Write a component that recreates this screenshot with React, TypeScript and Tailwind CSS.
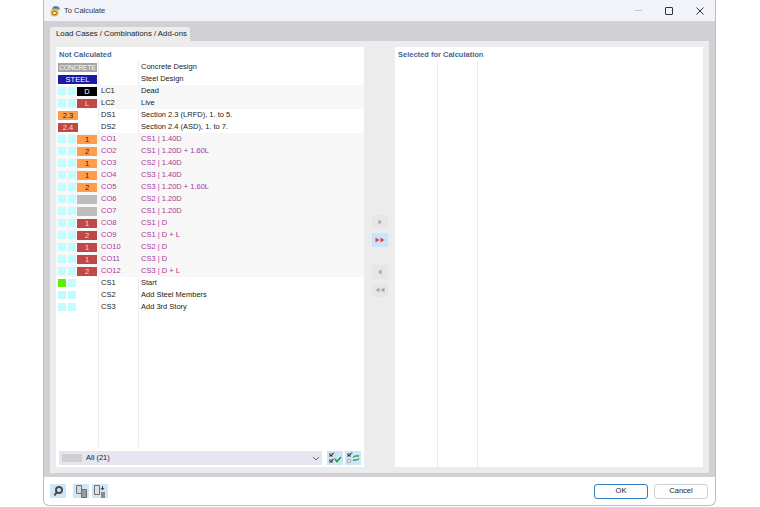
type Row = {
  mark?: "concrete" | "steel";
  squares?: boolean;
  green?: boolean;
  badge?: string;
  badgeColor?: string;
  badgeText?: string;
  wide?: boolean;
  code?: string;
  label: string;
  pink?: boolean;
  shaded?: boolean;
};

const ORANGE = "bg-[#ff9c4a]";
const RED = "bg-[#c04848]";
const GREY = "bg-[#bdbdbd]";

const co = (code: string, n: string, color: string, label: string): Row => ({
  squares: true,
  badge: n,
  badgeColor: color,
  badgeText: color === RED ? "text-[#f6dcdc]" : "text-[#222]",
  code,
  label,
  pink: true,
  shaded: true,
});

const ROWS: Row[] = [
  { mark: "concrete", label: "Concrete Design" },
  { mark: "steel", label: "Steel Design" },
  { squares: true, badge: "D", badgeColor: "bg-black", badgeText: "text-white", code: "LC1", label: "Dead", shaded: true },
  { squares: true, badge: "L", badgeColor: RED, badgeText: "text-[#f6dcdc]", code: "LC2", label: "Live", shaded: true },
  { wide: true, badge: "2.3", badgeColor: ORANGE, badgeText: "text-[#222]", code: "DS1", label: "Section 2.3 (LRFD), 1. to 5." },
  { wide: true, badge: "2.4", badgeColor: RED, badgeText: "text-[#f6dcdc]", code: "DS2", label: "Section 2.4 (ASD), 1. to 7." },
  co("CO1", "1", ORANGE, "CS1 | 1.40D"),
  co("CO2", "2", ORANGE, "CS1 | 1.20D + 1.60L"),
  co("CO3", "1", ORANGE, "CS2 | 1.40D"),
  co("CO4", "1", ORANGE, "CS3 | 1.40D"),
  co("CO5", "2", ORANGE, "CS3 | 1.20D + 1.60L"),
  co("CO6", "", GREY, "CS2 | 1.20D"),
  co("CO7", "", GREY, "CS1 | 1.20D"),
  co("CO8", "1", RED, "CS1 | D"),
  co("CO9", "2", RED, "CS1 | D + L"),
  co("CO10", "1", RED, "CS2 | D"),
  co("CO11", "1", RED, "CS3 | D"),
  co("CO12", "2", RED, "CS3 | D + L"),
  { squares: true, green: true, code: "CS1", label: "Start" },
  { squares: true, code: "CS2", label: "Add Steel Members" },
  { squares: true, code: "CS3", label: "Add 3rd Story" },
];

function ListRow({ row }: { row: Row }) {
  return (
    <div className={`flex h-3 items-center pl-0.5 ${row.shaded ? "bg-[#f7f7f7]" : ""}`}>
      <div className="flex w-10 shrink-0 items-center justify-between pr-px">
        {row.mark === "concrete" && (
          <div className="h-[9px] w-[39px] bg-[#a6a6a6] text-center text-[6.5px] leading-[9px] text-white">CONCRETE</div>
        )}
        {row.mark === "steel" && (
          <div className="h-[9px] w-[39px] bg-[#1a1aa6] text-center leading-[9px] text-white">STEEL</div>
        )}
        {row.wide && (
          <div className={`h-[9px] w-5 text-center leading-[9px] ${row.badgeColor} ${row.badgeText}`}>{row.badge}</div>
        )}
        {row.squares && (
          <>
            <div className={`size-2 ${row.green ? "bg-[#5cf000]" : "bg-[#c4fbfd]"}`} />
            <div className="size-2 bg-[#c4fbfd]" />
            {row.badge !== undefined ? (
              <div className={`h-[9px] w-5 text-center leading-[9px] ${row.badgeColor} ${row.badgeText}`}>{row.badge}</div>
            ) : (
              <div className="w-5" />
            )}
          </>
        )}
      </div>
      <div className={`w-10 shrink-0 pl-[3px] ${row.pink ? "text-[#a8389c]" : "text-[#222]"}`}>{row.code}</div>
      <div className={`pl-[3px] whitespace-nowrap ${row.pink ? "text-[#a8389c]" : "text-[#222]"}`}>{row.label}</div>
    </div>
  );
}

function ColumnLine({ className }: { className: string }) {
  return <div className={`absolute top-0 bottom-0 w-px bg-[#ececec] ${className}`} />;
}

function ArrowButton({ active, double, left }: { active?: boolean; double?: boolean; left?: boolean }) {
  const fill = active ? "#e8404c" : "#a8a8a8";
  return (
    <div className={`flex h-3.5 w-4 items-center justify-center ${active ? "bg-[#cce4f7]" : "bg-[#e6e6e6]"}`}>
      <svg width="10" height="6" viewBox="0 0 10 6" className={left ? "rotate-180" : ""}>
        {double ? (
          <path d="M.5 .5L4.500 3 .5 5.500zM5.500 .5L9.500 3l-4 2.500z" fill={fill} />
        ) : (
          <path d="M3.500 .5L7 3 3.500 5.500z" fill={fill} />
        )}
      </svg>
    </div>
  );
}

function FooterIcon({ children }: { children: React.ReactNode }) {
  return <div className="flex h-3.5 w-4 items-center justify-center bg-[#cfe6f8]">{children}</div>;
}

export default function App() {
  return (
    <div className="h-[507px] w-[760px] bg-white font-['Liberation_Sans',sans-serif] text-[7.5px] text-[#222]">
      <div className="ml-[43px] flex h-[506px] w-[673px] flex-col overflow-hidden rounded-b-md border border-t-0 border-[#bdbdbd] bg-white">
        {/* title bar */}
        <div className="flex h-[21px] shrink-0 items-center bg-[#f2f3f9]">
          <svg width="12" height="12" viewBox="0 0 12 12" className="ml-[5px]">
            <path d="M3 5a4 4 0 0 1 4-4l3 1 1 3-3-1H5z" fill="#4a7fa8" />
            <circle cx="5.500" cy="7.500" r="4" fill="#eab52e" />
            <circle cx="5.500" cy="8" r="1.800" fill="#fff" stroke="#6b5210" strokeWidth=".8" />
          </svg>
          <span className="ml-[3px] text-[#333]">To Calculate</span>
          <div className="ml-auto flex items-center">
            <div className="h-px w-[7px] bg-[#c4c4c4]" />
            <div className="ml-[23px] size-2 rounded-[1px] border border-[#333]" />
            <svg width="8" height="8" viewBox="0 0 8 8" className="mr-[11px] ml-[23px]">
              <path d="M.5 .5l7 7M7.500 .5l-7 7" stroke="#333" strokeWidth="1" />
            </svg>
          </div>
        </div>

        {/* tab area */}
        <div className="flex h-[456px] shrink-0 flex-col bg-[#d1d1d5] px-[6px] pt-[6px]">
          <div className="flex h-3.5 w-[140px] shrink-0 items-center rounded-t-[2px] bg-[#ececec] pl-[6px] text-[7.8px] whitespace-nowrap">
            Load Cases / Combinations / Add-ons
          </div>
          <div className="flex h-[432px] bg-[#ececec] p-[6px]">
            {/* left list */}
            <div className="flex h-[420px] w-[308px] shrink-0 flex-col bg-white">
              <div className="h-3.5 pt-0.5 pl-[3px] font-bold text-[#4a6590]">Not Calculated</div>
              <div className="relative min-h-0 flex-1">
                <ColumnLine className="left-[42px]" />
                <ColumnLine className="left-[82px]" />
                <div className="relative">
                  {ROWS.map((row) => (
                    <ListRow key={row.label + row.code} row={row} />
                  ))}
                </div>
              </div>
              <div className="flex h-5 items-start px-[3px] pt-1">
                <div className="flex h-3.5 w-[263px] shrink-0 items-center bg-[#e6e6f2] pl-[3px]">
                  <div className="h-2 w-5 bg-[#cfcfcf]" />
                  <span className="ml-1">All (21)</span>
                  <svg width="8" height="5" viewBox="0 0 8 5" className="mr-0.5 ml-auto">
                    <path d="M1 1l3 3 3-3" stroke="#666" fill="none" />
                  </svg>
                </div>
                <div className="ml-[5px] flex h-3.5 w-4 shrink-0 items-center justify-center bg-[#cfe6f8]">
                  <svg width="14" height="12" viewBox="0 0 14 12">
                    <rect x="1" y="1" width="4" height="4" fill="#9a9a9a" />
                    <rect x="1" y="7" width="4" height="4" fill="#9a9a9a" />
                    <path d="M1.500 2.500L3 4l3-3.500M1.500 8.500L3 10l3-3.500" stroke="#333" fill="none" />
                    <path d="M7 7l2 2.500L13 5" stroke="#1a9a3a" fill="none" strokeWidth="1.500" />
                  </svg>
                </div>
                <div className="ml-0.5 flex h-3.5 w-4 shrink-0 items-center justify-center bg-[#cfe6f8]">
                  <svg width="14" height="12" viewBox="0 0 14 12">
                    <rect x="1" y="1" width="4" height="4" fill="#9a9a9a" />
                    <rect x="1.500" y="7.500" width="3" height="3" fill="none" stroke="#b4b4b4" />
                    <path d="M1.500 2.500L3 4l3-3.500" stroke="#333" fill="none" />
                    <path d="M7 5.500C8 4 10 3.500 13 4M13 6.500C12 8 10 8.500 7 8" stroke="#1a9a3a" fill="none" strokeWidth="1.300" />
                  </svg>
                </div>
              </div>
            </div>

            {/* transfer buttons */}
            <div className="flex w-[31px] shrink-0 flex-col items-center pt-[168px]">
              <ArrowButton />
              <div className="mt-1">
                <ArrowButton active double />
              </div>
              <div className="mt-[18px]">
                <ArrowButton left />
              </div>
              <div className="mt-1">
                <ArrowButton left double />
              </div>
            </div>

            {/* right list */}
            <div className="flex h-[420px] w-[308px] shrink-0 flex-col bg-white">
              <div className="h-3.5 pt-0.5 pl-[3px] font-bold text-[#4a6590]">Selected for Calculation</div>
              <div className="relative flex-1">
                <ColumnLine className="left-[42px]" />
                <ColumnLine className="left-[82px]" />
              </div>
            </div>
          </div>
        </div>

        {/* footer */}
        <div className="flex min-h-0 flex-1 items-center pr-[7px] pl-[6px]">
          <FooterIcon>
            <svg width="12" height="12" viewBox="0 0 12 12">
              <circle cx="7" cy="5" r="3" fill="#dce9f3" stroke="#4a4a4a" strokeWidth="2" />
              <path d="M4.500 7.500L2.500 10.500" stroke="#4a4a4a" strokeWidth="2" />
            </svg>
          </FooterIcon>
          <div className="ml-[7px]">
            <FooterIcon>
              <svg width="14" height="13" viewBox="0 0 14 13">
                <path d="M2.500 .5h5v8h-5z" fill="#d8d8d8" stroke="#707070" />
                <path d="M7.500 4.500h5v8h-5z" fill="#9a9a9a" stroke="#707070" />
              </svg>
            </FooterIcon>
          </div>
          <div className="ml-[3px]">
            <FooterIcon>
              <svg width="14" height="13" viewBox="0 0 14 13">
                <path d="M1.500 .5h5v9h-5z" fill="#e2e2e2" stroke="#707070" />
                <path d="M9.500 1v3M8 3l1.500 2L11 3" stroke="#444" fill="none" />
                <path d="M8 7h4v6H8z" fill="#8c8c8c" />
              </svg>
            </FooterIcon>
          </div>
          <div className="ml-auto flex h-[15px] w-[54px] items-center justify-center rounded-[3px] border border-[#2f7fc4] bg-[#fdfdfd]">
            OK
          </div>
          <div className="ml-1.5 flex h-[15px] w-[54px] items-center justify-center rounded-[3px] border border-[#d0d0d0] bg-[#fdfdfd]">
            Cancel
          </div>
        </div>
      </div>
    </div>
  );
}
